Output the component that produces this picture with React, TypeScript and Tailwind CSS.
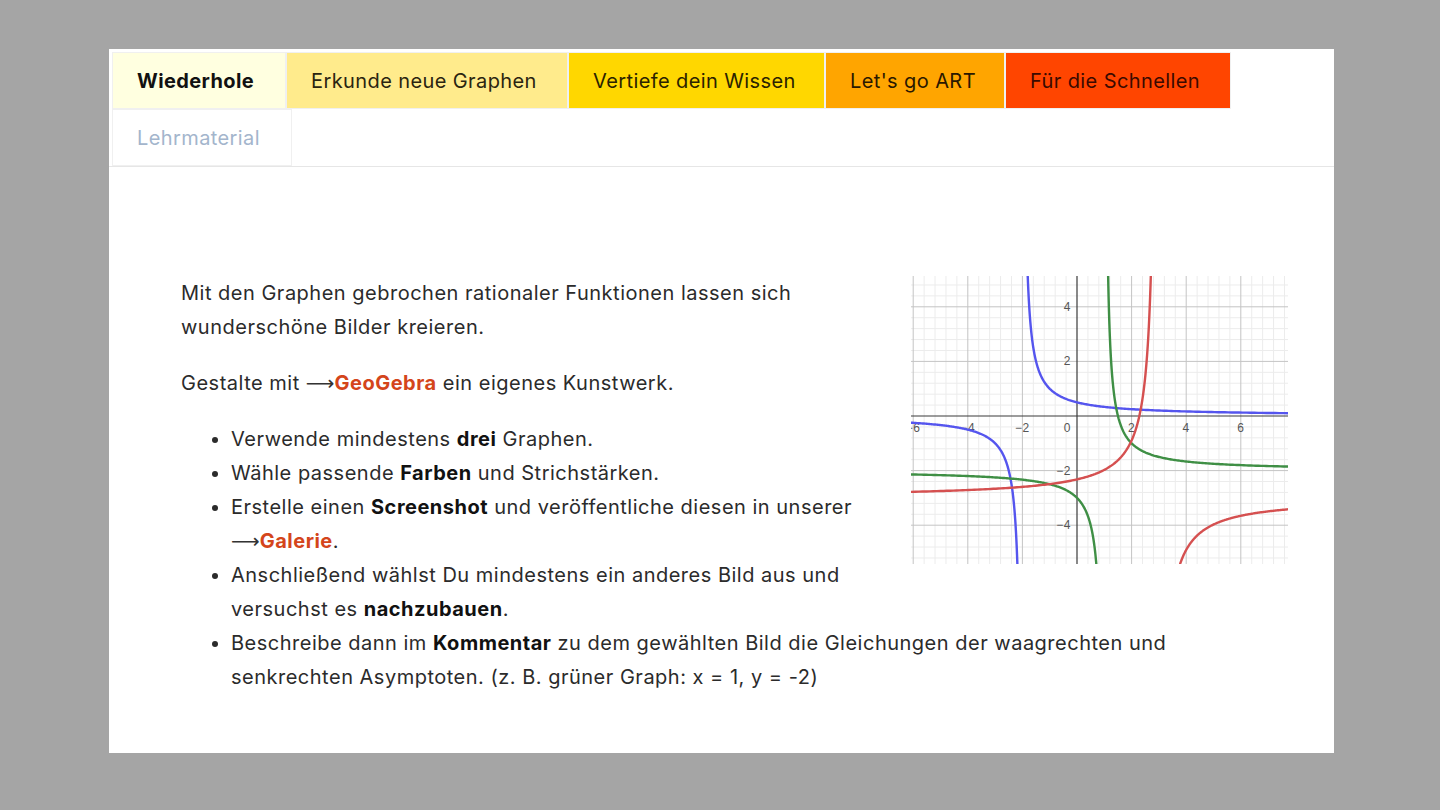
import React from "react";

const tabs = [
  { label: "Wiederhole", bg: "bg-[#ffffe0]", w: "w-[174px]", text: "text-[#111] font-bold" },
  { label: "Erkunde neue Graphen", bg: "bg-[#ffeb8c]", w: "w-[282px]", text: "text-[#2a2410]" },
  { label: "Vertiefe dein Wissen", bg: "bg-[#ffd700]", w: "w-[257px]", text: "text-[#2a2200]" },
  { label: "Let's go ART", bg: "bg-[#ffa500]", w: "w-[180px]", text: "text-[#2a1800]" },
  { label: "Für die Schnellen", bg: "bg-[#ff4500]", w: "w-[226px]", text: "text-[#3a0a00]" },
];

// graph geometry (pixels in the svg)
const W = 377;
const H = 288;
const OX = 166;
const OY = 140;
const S = 27.3;
const px = (x: number) => OX + x * S;
const py = (y: number) => OY - y * S;

function branch(f: (x: number) => number, a: number, side: number, dNear: number, dFar: number) {
  const pts: string[] = [];
  const n = 240;
  for (let i = 0; i <= n; i++) {
    const d = dNear * Math.pow(dFar / dNear, i / n);
    const x = a + side * d;
    pts.push(`${px(x).toFixed(2)},${py(f(x)).toFixed(2)}`);
  }
  return "M" + pts.join("L");
}

function Graph() {
  const blue = (x: number) => 1 / (x + 2);
  const green = (x: number) => 1 / (x - 1) - 2;
  const red = (x: number) => -2 / (x - 2.95) - 3;

  const minorX: number[] = [];
  for (let x = -6.4; x <= 8.01; x += 0.4) minorX.push(Math.round(x * 10) / 10);
  const minorY: number[] = [];
  for (let y = -5.6; y <= 5.61; y += 0.4) minorY.push(Math.round(y * 10) / 10);
  const isMajor = (v: number) => Math.abs(v / 2 - Math.round(v / 2)) < 0.001;

  return (
    <svg width={W} height={H} viewBox={`0 0 ${W} ${H}`} className="block">
      <rect width={W} height={H} fill="#ffffff" />
      {minorX.filter((v) => !isMajor(v)).map((v) => (
        <line key={"mx" + v} x1={px(v)} x2={px(v)} y1={0} y2={H} stroke="#ececec" strokeWidth={1} />
      ))}
      {minorY.filter((v) => !isMajor(v)).map((v) => (
        <line key={"my" + v} y1={py(v)} y2={py(v)} x1={0} x2={W} stroke="#ececec" strokeWidth={1} />
      ))}
      {minorX.filter((v) => isMajor(v) && v !== 0).map((v) => (
        <line key={"Mx" + v} x1={px(v)} x2={px(v)} y1={0} y2={H} stroke="#c4c4c4" strokeWidth={1} />
      ))}
      {minorY.filter((v) => isMajor(v) && v !== 0).map((v) => (
        <line key={"My" + v} y1={py(v)} y2={py(v)} x1={0} x2={W} stroke="#c4c4c4" strokeWidth={1} />
      ))}
      <line x1={px(0)} x2={px(0)} y1={0} y2={H} stroke="#3a3a3a" strokeWidth={1.2} />
      <line y1={py(0)} y2={py(0)} x1={0} x2={W} stroke="#3a3a3a" strokeWidth={1.2} />

      <g fontFamily="'Liberation Sans', Arial, sans-serif" fontSize={12} fill="#555">
        {[-6, -4, -2, 2, 4, 6].map((v) => (
          <text key={"lx" + v} x={px(v)} y={OY + 16} textAnchor="middle">
            {v < 0 ? "−" + Math.abs(v) : v}
          </text>
        ))}
        <text x={OX - 6} y={OY + 16} textAnchor="end">0</text>
        {[4, 2, -2, -4].map((v) => (
          <text key={"ly" + v} x={OX - 6} y={py(v) + 4} textAnchor="end">
            {v < 0 ? "−" + Math.abs(v) : v}
          </text>
        ))}
      </g>

      <g fill="none" strokeWidth={2.4} strokeLinecap="round">
        <path d={branch(blue, -2, -1, 1 / 6, 4.3)} stroke="#5555ee" />
        <path d={branch(blue, -2, 1, 1 / 6, 9.9)} stroke="#5555ee" />
        <path d={branch(green, 1, -1, 0.25, 7.3)} stroke="#3f8f45" />
        <path d={branch(green, 1, 1, 0.125, 6.9)} stroke="#3f8f45" />
        <path d={branch(red, 2.95, -1, 0.222, 9.3)} stroke="#d55050" />
        <path d={branch(red, 2.95, 1, 0.667, 4.95)} stroke="#d55050" />
      </g>
    </svg>
  );
}

function Arrow() {
  return <span className="font-['DejaVu_Sans',sans-serif] tracking-normal text-[#333]">⟶</span>;
}

export default function App() {
  return (
    <div className="min-h-screen bg-[#a5a5a5] pt-[49px] pl-[109px] font-['Inter','Noto_Sans',sans-serif]">
      <div className="w-[1225px] h-[704px] bg-white">
        {/* Tabs */}
        <div className="flex flex-wrap pl-[3px] pt-[3px] border-b border-[#e6e6e6]">
          {tabs.map((t) => (
            <div
              key={t.label}
              className={`${t.bg} ${t.w} ${t.text} h-[57px] flex items-center pl-6 border border-[#f0f0f0] text-[20px] tracking-[0.4px]`}
            >
              {t.label}
            </div>
          ))}
          <div className="w-full" />
          <div className="w-[180px] h-[57px] flex items-center pl-6 border border-[#f0f0f0] text-[20px] tracking-[0.4px] text-[#a3b5cc]">
            Lehrmaterial
          </div>
        </div>

        {/* Content */}
        <div className="pl-[72px] pr-[46px] pt-[109px] text-[20px] leading-[34px] tracking-[0.5px] text-[#2b2b2b]">
          <div className="float-right ml-10 mb-4">
            <Graph />
          </div>
          <p className="mb-[22px]">
            Mit den Graphen gebrochen rationaler Funktionen lassen sich wunderschöne Bilder kreieren.
          </p>
          <p className="mb-[22px]">
            Gestalte mit <Arrow />
            <span className="font-bold text-[#d4451b]">GeoGebra</span> ein eigenes Kunstwerk.
          </p>
          <ul className="list-disc pl-[50px]">
            <li>
              Verwende mindestens <b className="text-[#111]">drei</b> Graphen.
            </li>
            <li>
              Wähle passende <b className="text-[#111]">Farben</b> und Strichstärken.
            </li>
            <li>
              Erstelle einen <b className="text-[#111]">Screenshot</b> und veröffentliche diesen in unserer{" "}
              <Arrow />
              <span className="font-bold text-[#d4451b]">Galerie</span>.
            </li>
            <li>
              Anschließend wählst Du mindestens ein anderes Bild aus und versuchst es{" "}
              <b className="text-[#111]">nachzubauen</b>.
            </li>
            <li>
              Beschreibe dann im <b className="text-[#111]">Kommentar</b> zu dem gewählten Bild die Gleichungen der
              waagrechten und senkrechten Asymptoten. (z. B. grüner Graph: x = 1, y = -2)
            </li>
          </ul>
        </div>
      </div>
    </div>
  );
}
